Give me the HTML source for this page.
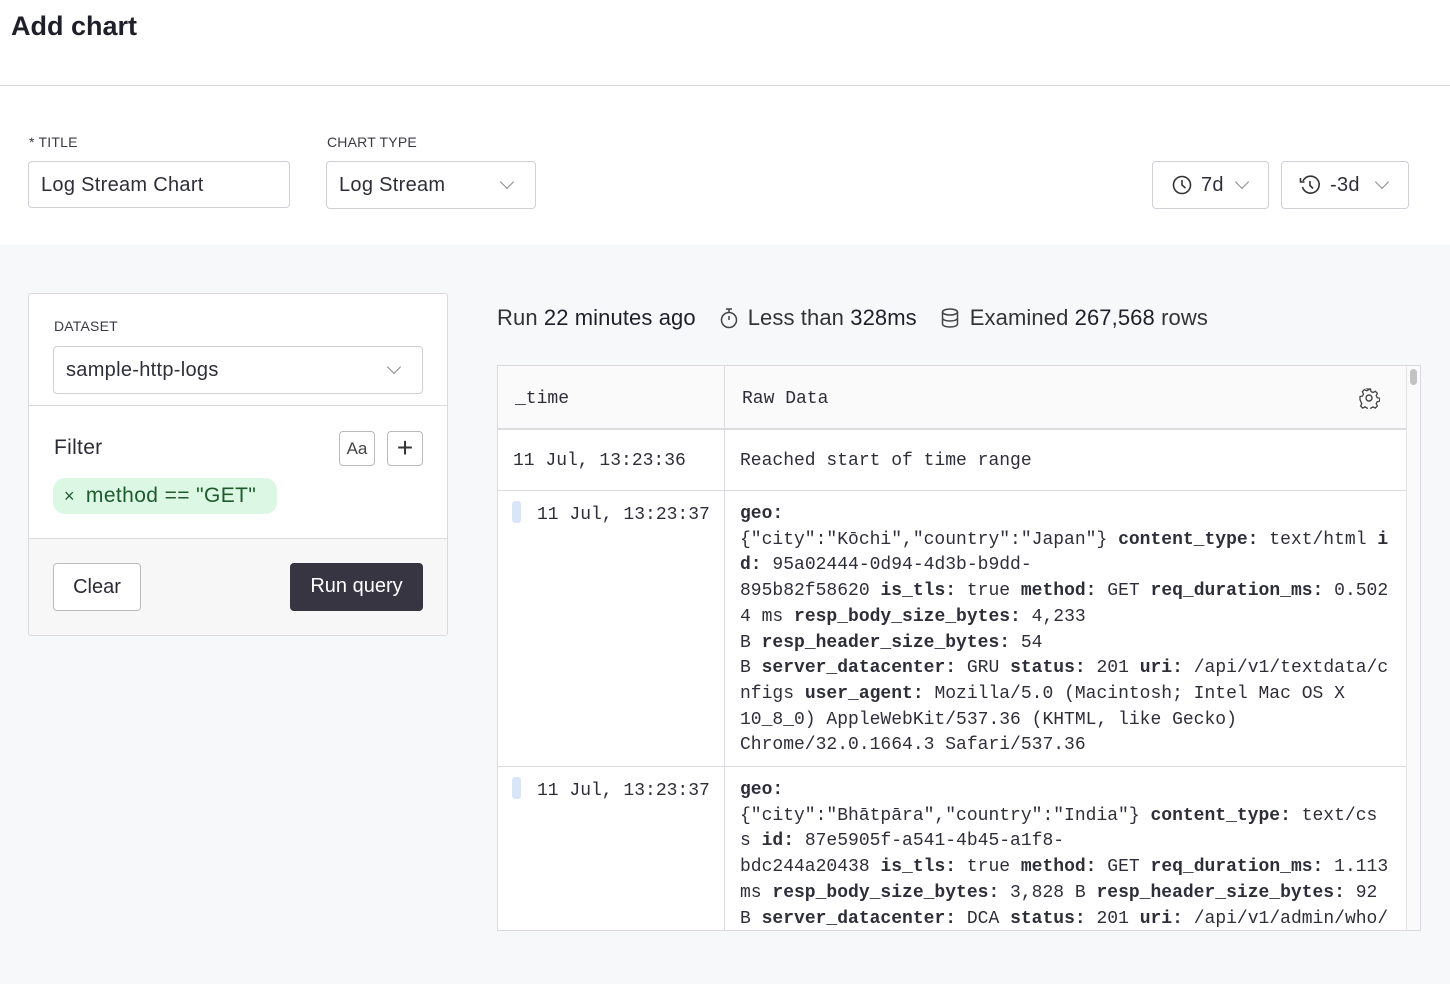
<!DOCTYPE html>
<html><head><meta charset="utf-8"><style>
*{box-sizing:border-box;margin:0;padding:0}
body{width:1450px;height:984px;overflow:hidden;background:#f7f8fa;font-family:"Liberation Sans",sans-serif;color:#2b2b36;position:relative}
.abs{position:absolute}
.top{position:absolute;left:0;top:0;width:1450px;height:245px;background:#fff}
.hr{position:absolute;left:0;top:85px;width:1450px;height:1px;background:#d9d9de}
h1{position:absolute;left:11px;top:11px;font-size:27px;font-weight:bold;color:#1f1f2a}
.lbl{position:absolute;font-size:14px;color:#3a3a46;letter-spacing:.2px}
.inp{position:absolute;border:1px solid #cfcfd6;border-radius:4px;background:#fff;font-size:20px;color:#2e2e3a;padding-left:12px;display:flex;align-items:center;letter-spacing:.3px}
.chev{position:absolute;width:10px;height:10px;border-right:1.3px solid #888;border-bottom:1.3px solid #888;transform:rotate(45deg)}
.panel{position:absolute;left:28px;top:293px;width:420px;height:343px;border:1px solid #d9d9de;border-radius:3px;background:#fff;overflow:hidden}
.mono{font-family:"Liberation Mono",monospace;font-size:18px;color:#2e2e3a}
.tbl{position:absolute;left:497px;top:365px;width:924px;height:566px;border:1px solid #d9d9de;background:#fff;overflow:hidden}
.raw{position:absolute;left:242px;white-space:pre;line-height:25.7px}
b{font-weight:bold}
</style></head><body>
<div class="top"></div>
<div class="hr"></div>
<h1>Add chart</h1>
<div class="lbl" style="left:29px;top:134px">* TITLE</div>
<div class="lbl" style="left:327px;top:134px">CHART TYPE</div>
<div class="inp" style="left:28px;top:161px;width:262px;height:47px;padding-top:2px">Log Stream Chart</div>
<div class="inp" style="left:326px;top:161px;width:210px;height:48px">Log Stream<div class="chev" style="left:175px;top:15px"></div></div>
<div class="inp" style="left:1152px;top:161px;width:117px;height:48px;padding-left:18px">
<svg width="22" height="22" viewBox="0 0 22 22" style="margin-right:8px"><circle cx="11" cy="11" r="8.5" fill="none" stroke="#333" stroke-width="1.6"/><path d="M11 6v5l3.5 3" fill="none" stroke="#333" stroke-width="1.6"/></svg>7d<div class="chev" style="left:84px;top:15px"></div></div>
<div class="inp" style="left:1281px;top:161px;width:128px;height:48px;padding-left:16px">
<svg width="24" height="22" viewBox="0 0 24 22" style="margin-right:8px"><path d="M5 7A8.5 8.5 0 1 1 4.5 13" fill="none" stroke="#333" stroke-width="1.6"/><path d="M2.5 4v4h4" fill="none" stroke="#333" stroke-width="1.6"/><path d="M12 7v4.5l3 3" fill="none" stroke="#333" stroke-width="1.6"/></svg>-3d<div class="chev" style="left:95px;top:15px"></div></div>

<div class="panel">
 <div class="lbl" style="left:25px;top:24px">DATASET</div>
 <div class="inp" style="left:24px;top:52px;width:370px;height:48px">sample-http-logs<div class="chev" style="left:335px;top:15px"></div></div>
 <div class="abs" style="left:0;top:111px;width:420px;height:1px;background:#d9d9de"></div>
 <div class="abs" style="left:25px;top:142px;font-size:21px;letter-spacing:.3px">Filter</div>
 <div class="abs" style="left:310px;top:137px;width:36px;height:35px;border:1px solid #bbb;border-radius:4px;font-size:17px;text-align:center;line-height:33px;color:#444">Aa</div>
 <div class="abs" style="left:358px;top:137px;width:36px;height:35px;border:1px solid #bbb;border-radius:4px;font-size:28px;text-align:center;line-height:32px;color:#333;font-weight:300">+</div>
 <div class="abs" style="left:24px;top:184px;width:224px;height:36px;background:#dcf8e4;border-radius:12px;color:#1e5a2e;font-size:21px;line-height:36px;padding-left:11px;letter-spacing:.4px;white-space:nowrap"><span style="font-size:18px;margin-right:11px">×</span>method == "GET"</div>
 <div class="abs" style="left:0;top:244px;width:420px;height:100px;background:#f7f7f8;border-top:1px solid #d9d9de"></div>
 <div class="abs" style="left:24px;top:269px;width:88px;height:48px;border:1px solid #bbb;border-radius:4px;background:#fff;font-size:20px;text-align:center;line-height:46px">Clear</div>
 <div class="abs" style="left:261px;top:269px;width:133px;height:48px;border-radius:4px;background:#373542;color:#fff;font-size:20px;text-align:center;line-height:46px">Run query</div>
</div>

<div class="abs" style="left:497px;top:305px;font-size:22px;color:#333;display:flex;align-items:center;white-space:pre;letter-spacing:.1px">Run <span style="color:#1f1f2a">22 minutes ago</span>
<svg width="22" height="24" viewBox="0 0 22 24" style="margin:0 8px 0 22px"><circle cx="11" cy="14" r="7.5" fill="none" stroke="#444" stroke-width="1.5"/><path d="M8 3h6M11 3v3M11 10v4" fill="none" stroke="#444" stroke-width="1.5"/></svg>Less than <span style="color:#1f1f2a">328ms</span>
<svg width="22" height="24" viewBox="0 0 22 24" style="margin:0 9px 0 22px"><ellipse cx="11" cy="6" rx="7.5" ry="3" fill="none" stroke="#444" stroke-width="1.5"/><path d="M3.5 6v12c0 1.7 3.4 3 7.5 3s7.5-1.3 7.5-3V6M3.5 12c0 1.7 3.4 3 7.5 3s7.5-1.3 7.5-3" fill="none" stroke="#444" stroke-width="1.5"/></svg>Examined <span style="color:#1f1f2a">267,568</span> rows</div>

<div class="tbl mono">
 <div class="abs" style="left:0;top:0;width:924px;height:64px;background:#fafafb;border-bottom:2px solid #dcdce0"></div>
 <div class="abs" style="left:226px;top:0;width:1px;height:566px;background:#dcdce0"></div>
 <div class="abs" style="left:17px;top:23px">_time</div>
 <div class="abs" style="left:244px;top:23px">Raw Data</div>
 <svg class="abs" style="left:860px;top:21px" width="22" height="22" viewBox="0 0 22 22"><circle cx="11" cy="11" r="3" fill="none" stroke="#444" stroke-width="1.4"/><path d="M9.5 2h3l.5 2.5 2 1 2.3-1.2 2.1 2.1-1.2 2.3 1 2 2.5.5v3l-2.5.5-1 2 1.2 2.3-2.1 2.1-2.3-1.2-2 1-.5 2.5h-3l-.5-2.5-2-1-2.3 1.2-2.1-2.1 1.2-2.3-1-2L2 12.5v-3l2.5-.5 1-2-1.2-2.3 2.1-2.1 2.3 1.2 2-1z" fill="none" stroke="#444" stroke-width="1.3"/></svg>
 <div class="abs" style="left:908px;top:0;width:16px;height:566px;background:#fafafa;border-left:1px solid #e6e6e6"></div>
 <div class="abs" style="left:912px;top:3px;width:7px;height:16px;background:#c2c2c2;border-radius:4px"></div>
 <div class="abs" style="left:0;top:124px;width:908px;height:1px;background:#dcdce0"></div>
 <div class="abs" style="left:0;top:400px;width:908px;height:1px;background:#dcdce0"></div>
 <div class="abs" style="left:15px;top:85px">11 Jul, 13:23:36</div>
 <div class="abs" style="left:242px;top:85px">Reached start of time range</div>
 <div class="abs" style="left:14px;top:135px;width:9px;height:22px;background:#d8e6f7;border-radius:3px"></div>
 <div class="abs" style="left:39px;top:139px">11 Jul, 13:23:37</div>
 <div class="raw" style="top:136px"><b>geo:</b>
{"city":"Kōchi","country":"Japan"} <b>content_type:</b> text/html <b>i</b>
<b>d:</b> 95a02444-0d94-4d3b-b9dd-
895b82f58620 <b>is_tls:</b> true <b>method:</b> GET <b>req_duration_ms:</b> 0.502
4 ms <b>resp_body_size_bytes:</b> 4,233
B <b>resp_header_size_bytes:</b> 54
B <b>server_datacenter:</b> GRU <b>status:</b> 201 <b>uri:</b> /api/v1/textdata/c
nfigs <b>user_agent:</b> Mozilla/5.0 (Macintosh; Intel Mac OS X
10_8_0) AppleWebKit/537.36 (KHTML, like Gecko)
Chrome/32.0.1664.3 Safari/537.36</div>
 <div class="abs" style="left:14px;top:411px;width:9px;height:22px;background:#d8e6f7;border-radius:3px"></div>
 <div class="abs" style="left:39px;top:415px">11 Jul, 13:23:37</div>
 <div class="raw" style="top:412px"><b>geo:</b>
{"city":"Bhātpāra","country":"India"} <b>content_type:</b> text/cs
s <b>id:</b> 87e5905f-a541-4b45-a1f8-
bdc244a20438 <b>is_tls:</b> true <b>method:</b> GET <b>req_duration_ms:</b> 1.113
ms <b>resp_body_size_bytes:</b> 3,828 B <b>resp_header_size_bytes:</b> 92
B <b>server_datacenter:</b> DCA <b>status:</b> 201 <b>uri:</b> /api/v1/admin/who/</div>
</div>
</body></html>
